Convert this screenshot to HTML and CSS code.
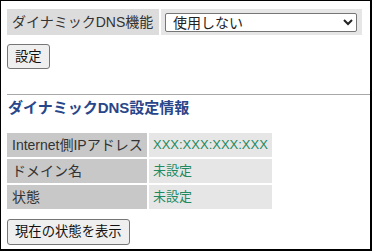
FILE: index.html
```html
<!DOCTYPE html>
<html lang="ja">
<head>
<meta charset="utf-8">
<title>ダイナミックDNS</title>
<link rel="stylesheet" href="styles.css">
</head>
<body>
<div class="frame">
  <div class="setrow">
    <div class="cell-label">ダイナミックDNS機能</div>
    <div class="cell-value">
      <select class="sel">
        <option>使用しない</option>
        <option>使用する</option>
      </select>
    </div>
  </div>
  <button class="btn" type="button">設定</button>
  <hr class="rule">
  <h2 class="heading">ダイナミックDNS設定情報</h2>
  <div class="info">
    <div class="info-label">Internet側IPアドレス</div>
    <div class="info-value">XXX:XXX:XXX:XXX</div>
    <div class="info-label">ドメイン名</div>
    <div class="info-value">未設定</div>
    <div class="info-label">状態</div>
    <div class="info-value">未設定</div>
  </div>
  <button class="btn btn-status" type="button">現在の状態を表示</button>
</div>
</body>
</html>
```

FILE: styles.css
```css
html, body {
  margin: 0;
  padding: 0;
  background: #fff;
}

body {
  font-family: "Liberation Sans", "Noto Sans CJK JP", sans-serif;
  font-size: 14px;
  color: #333;
}

.frame {
  box-sizing: border-box;
  width: 372px;
  height: 251px;
  border: 1px solid #000;
  border-right-width: 2px;
  border-bottom-width: 2px;
  padding-left: 6px;
  overflow: hidden;
}

.setrow {
  display: grid;
  grid-template-columns: 152px 201px;
  column-gap: 2px;
  height: 26px;
  margin-top: 8px;
}

.cell-label {
  background: #dcdcdc;
  padding-left: 5px;
  line-height: 26px;
  white-space: nowrap;
}

.cell-value {
  background: #e6e6e6;
  display: flex;
  align-items: center;
  padding-left: 4px;
}

.sel {
  box-sizing: border-box;
  width: 192px;
  height: 19px;
  margin: 0;
  padding: 0 0 0 3px;
  font-family: "Liberation Sans", "Noto Sans CJK JP", sans-serif;
  font-size: 14px;
  color: #222;
  background: #fff;
  border: 1px solid #767676;
  border-radius: 2px;
}

.btn {
  display: block;
  box-sizing: border-box;
  height: 25px;
  margin: 9px 0 0 0;
  padding: 0 7px;
  font-family: "Liberation Sans", "Noto Sans CJK JP", sans-serif;
  font-size: 13.33px;
  line-height: 23px;
  color: #111;
  background: #efefef;
  border: 1px solid #767676;
  border-radius: 3px;
}

.rule {
  margin: 25px 0 0 0;
  height: 0;
  border: 0;
  border-top: 1px solid #a8a8a8;
}

.heading {
  margin: 2px 0 0 1px;
  font-size: 15px;
  font-weight: bold;
  line-height: 22px;
  color: #284689;
}

.info {
  display: grid;
  grid-template-columns: 140px 123px;
  grid-auto-rows: 24px;
  gap: 2px;
  margin-top: 14px;
  width: 265px;
}

.info-label {
  background: #c8c8c8;
  padding-left: 5px;
  line-height: 24px;
  white-space: nowrap;
}

.info-value {
  background: #e6e6e6;
  padding-left: 4px;
  font-size: 13px;
  line-height: 24px;
  color: #1f8a5f;
  white-space: nowrap;
}

.btn-status {
  margin-top: 10px;
  height: 26px;
  line-height: 24px;
}
```
